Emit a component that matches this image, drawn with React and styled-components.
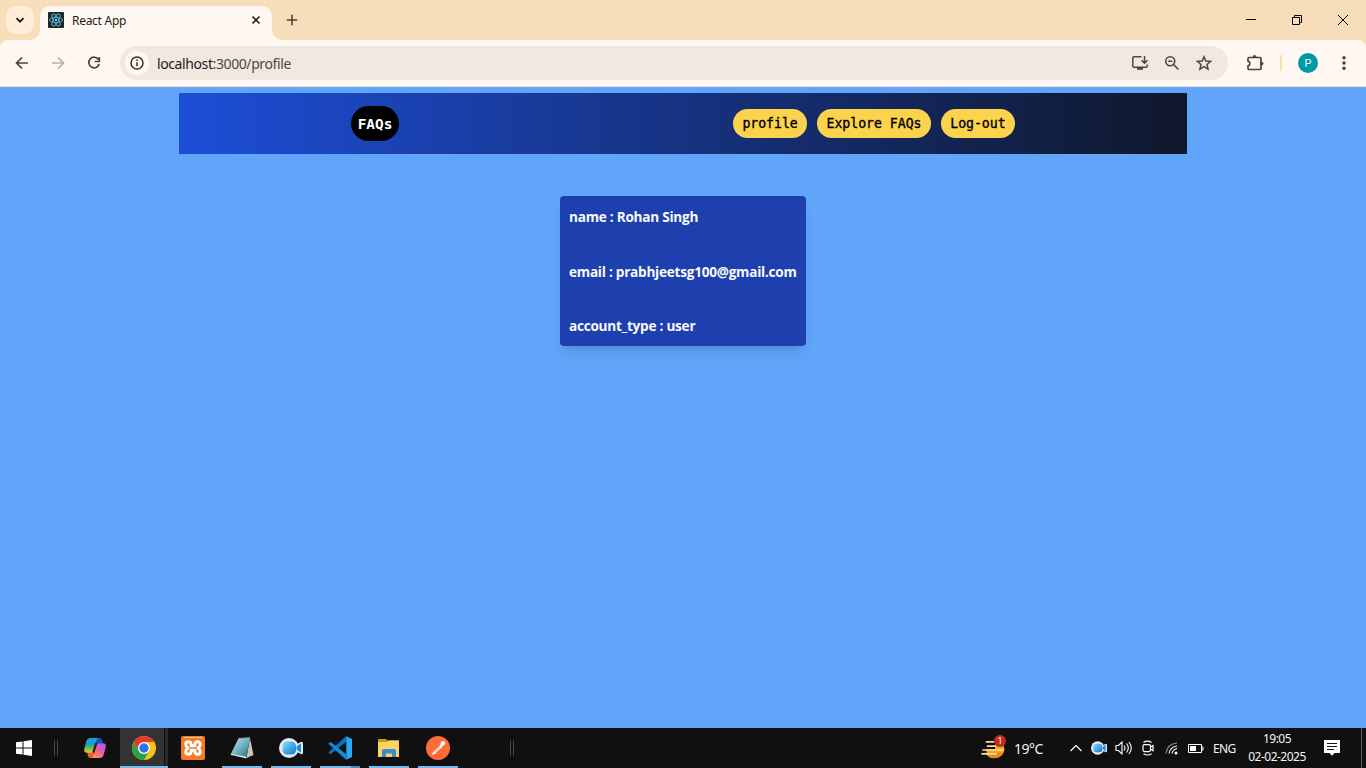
import React from "react";
import styled, { createGlobalStyle } from "styled-components";

const GlobalStyle = createGlobalStyle`
  * { box-sizing: border-box; }
  html, body { margin: 0; height: 100%; overflow: hidden; }
  body { font-family: "Open Sans", "Noto Sans", sans-serif; }
  svg { display: block; flex: none; }
`;

const Screen = styled.div`
  width: 1366px;
  height: 768px;
  display: flex;
  flex-direction: column;
  overflow: hidden;
  background: #60a5fa;
`;

/* ---------- browser frame ---------- */
const TabStrip = styled.header`
  height: 40px;
  flex: none;
  display: flex;
  align-items: flex-start;
  background: #f7deba;
  padding-left: 6px;
`;
const TabSearch = styled.div`
  width: 28px;
  height: 28px;
  margin-top: 6px;
  border-radius: 10px;
  background: #ffedd9;
  display: grid;
  place-items: center;
`;
const Tab = styled.div`
  position: relative;
  width: 232px;
  height: 34px;
  margin: 6px 0 0 6px;
  padding: 0 9px 6px 8px;
  border-radius: 10px 10px 0 0;
  background: #fff8f2;
  display: flex;
  align-items: center;
  &::before,
  &::after {
    content: "";
    position: absolute;
    bottom: 0;
    width: 10px;
    height: 10px;
  }
  &::before {
    left: -10px;
    background: radial-gradient(circle at 0 0, transparent 9.5px, #fff8f2 10px);
  }
  &::after {
    right: -10px;
    background: radial-gradient(circle at 100% 0, transparent 9.5px, #fff8f2 10px);
  }
`;
const TabTitle = styled.span`
  flex: 1;
  margin-left: 8px;
  padding-top: 1px;
  font-family: "Noto Sans", sans-serif;
  font-size: 12px;
  letter-spacing: -0.28px;
  line-height: 16px;
  color: #1f1b16;
`;
const NewTab = styled.div`
  margin: 14px 0 0 14px;
`;
const WindowControls = styled.div`
  margin-left: auto;
  display: flex;
`;
const WindowButton = styled.div`
  width: 46px;
  height: 40px;
  display: grid;
  place-items: center;
`;
const ToolbarShell = styled.div`
  flex: none;
  height: 47px;
  background: #f7deba;
`;
const Toolbar = styled.div`
  height: 47px;
  display: flex;
  align-items: center;
  background: #fff8f2;
  border-radius: 8px 8px 0 0;
  border-bottom: 1px solid #eae0d7;
  padding: 0 14px 0 14px;
`;
const NavIcons = styled.div`
  display: flex;
  gap: 20px;
`;
const AddressBar = styled.div`
  width: 1108px;
  height: 34px;
  flex: none;
  margin-left: 18px;
  border-radius: 17px;
  background: #f1e8e1;
  display: flex;
  align-items: center;
  padding: 0 16px 0 5px;
`;
const SiteInfo = styled.div`
  width: 24px;
  height: 24px;
  border-radius: 50%;
  background: #fff8f2;
  display: grid;
  place-items: center;
`;
const Url = styled.span`
  flex: 1;
  margin-left: 8px;
  padding-top: 1px;
  font-family: "Noto Sans", sans-serif;
  font-size: 14px;
  letter-spacing: -0.4px;
  line-height: 20px;
  color: #51463c;
`;
const Host = styled.span`
  color: #1f1b16;
`;
const AddressIcons = styled.div`
  display: flex;
  gap: 16px;
`;
const ToolbarEnd = styled.div`
  flex: 1;
  display: flex;
  align-items: center;
  padding-left: 18px;
`;
const Separator = styled.i`
  width: 2px;
  height: 16px;
  margin-left: 16px;
  background: #ffdcab;
`;
const Avatar = styled.div`
  width: 20px;
  height: 20px;
  flex: none;
  margin: 0 18px 0 16px;
  border-radius: 50%;
  background: #0097a7;
  color: #e6fcff;
  font: 11px/21px Roboto, sans-serif;
  text-align: center;
`;

/* ---------- web page ---------- */
const Page = styled.main`
  flex: 1;
  display: flex;
  flex-direction: column;
  align-items: center;
  padding-top: 6px;
`;
const Navbar = styled.nav`
  width: 1008px;
  height: 61px;
  padding: 0 172px;
  display: flex;
  align-items: center;
  justify-content: space-between;
  background: linear-gradient(to right, #1d4ed8, #0f172a);
  font-family: "DejaVu Sans Mono", monospace;
  font-weight: 700;
`;
const Brand = styled.div`
  width: 48px;
  height: 35px;
  border-radius: 18px;
  background: #000;
  color: #fff;
  font-size: 14.4px;
  line-height: 36px;
  text-align: center;
`;
const NavLinks = styled.div`
  display: flex;
  gap: 10px;
`;
const NavButton = styled.div`
  height: 29px;
  padding: 0 9.4px;
  border-radius: 15px;
  background: #fcd34d;
  color: #000;
  font-size: 13.2px;
  font-weight: 400;
  -webkit-text-stroke: 0.35px #000;
  letter-spacing: -0.03px;
  line-height: 30px;
  white-space: pre;
`;
const ProfileCard = styled.section`
  width: 246px;
  height: 150px;
  margin-top: 42px;
  padding: 10px 9px 10px;
  display: flex;
  flex-direction: column;
  justify-content: space-between;
  border-radius: 4px;
  background: #1e40af;
  box-shadow: 0 9px 13px -3px rgba(0, 0, 0, 0.1), 0 4px 5px -4px rgba(0, 0, 0, 0.1);
`;
const Field = styled.p`
  margin: 0;
  color: #f8fafc;
  font-family: "Open Sans", sans-serif;
  font-size: 13.6px;
  font-weight: 700;
  line-height: 21px;
  white-space: nowrap;
  letter-spacing: -0.25px;
`;

/* ---------- taskbar ---------- */
const Taskbar = styled.footer`
  height: 40px;
  flex: none;
  display: flex;
  background: #101010;
  color: #fff;
`;
const StartButton = styled.div`
  width: 48px;
  display: grid;
  place-items: center;
`;
const Grip = styled.i`
  width: 4px;
  height: 16px;
  margin: 12px ${(p) => p.$after}px 0 ${(p) => p.$before}px;
  border: solid #454545;
  border-width: 0 1px;
`;
const Apps = styled.div`
  display: flex;
  gap: 1px;
`;
const AppButton = styled.div`
  width: 48px;
  height: 40px;
  display: grid;
  grid-template-rows: 38px 2px;
  justify-items: center;
  align-items: center;
  background: ${(p) => (p.$active ? "linear-gradient(to right, #333 44px, #101010 44px, #101010 45px, #292929 45px)" : "none")};
  &::after {
    content: "";
    width: ${(p) => (p.$active ? 48 : 40)}px;
    height: 2px;
    background: ${(p) => (p.$grouped ? "linear-gradient(to right, #76b9ed 31px, #5486ad 31px)" : p.$open ? "#76b9ed" : "none")};
  }
`;
const AppIcon = styled.div`
  padding-top: 2px;
`;
const Tray = styled.div`
  margin-left: auto;
  display: flex;
  align-items: center;
  font-family: "Noto Sans", sans-serif;
  font-size: 12px;
  color: #f5f5f5;
`;
const Weather = styled.div`
  position: relative;
  width: 26px;
  height: 26px;
`;
const Badge = styled.span`
  position: absolute;
  left: 13px;
  top: 0px;
  width: 12px;
  height: 12px;
  border-radius: 50%;
  background: #c42b1c;
  color: #fff;
  font: 9px/12px "Noto Sans", sans-serif;
  text-align: center;
`;
const Temperature = styled.span`
  width: 62px;
  padding-left: 7px;
  font-size: 14px;
  letter-spacing: -0.5px;
`;
const TrayIcons = styled.div`
  display: flex;
  align-items: center;
  gap: 8px;
`;
const Language = styled.span`
  width: 43px;
  padding-left: 9px;
  font-size: 12px;
  letter-spacing: -0.65px;
`;
const Clock = styled.div`
  width: 60px;
  text-align: center;
  line-height: 18px;
  white-space: nowrap;
  letter-spacing: -0.5px;
`;
const Notices = styled.div`
  width: 55px;
  height: 40px;
  margin-right: 4px;
  padding-right: 4px;
  display: flex;
  align-items: center;
  justify-content: center;
  border-right: 1px solid #5c5c5c;
`;

const Stroke = ({ w = 16, h = w, color = "#51432f", sw = 1.7, children }) => (
  <svg width={w} height={h} viewBox={`0 0 ${w} ${h}`} fill="none" stroke={color} strokeWidth={sw}>
    {children}
  </svg>
);

const ReactLogo = () => (
  <svg width="16" height="16" viewBox="0 0 16 16">
    <rect width="16" height="16" rx="1" fill="#20232a" />
    <g fill="none" stroke="#53b7ce" strokeWidth=".9">
      {[30, 90, 150].map((a) => (
        <ellipse key={a} cx="8" cy="8" rx="6.7" ry="2.6" transform={`rotate(${a - 30} 8 8)`} />
      ))}
    </g>
    <circle cx="8" cy="8" r="1.3" fill="#61dafb" />
  </svg>
);

const CopilotLogo = () => (
  <svg width="24" height="24" viewBox="0 0 24 24">
    <defs>
      <linearGradient id="cpA" x1="0" y1="0" x2="0" y2="1">
        <stop offset="0" stopColor="#1b9df0" />
        <stop offset=".45" stopColor="#18a3b4" />
        <stop offset=".75" stopColor="#8cbf45" />
        <stop offset="1" stopColor="#f5c51d" />
      </linearGradient>
      <linearGradient id="cpB" x1=".8" y1="0" x2=".2" y2="1">
        <stop offset="0" stopColor="#a65af0" />
        <stop offset=".5" stopColor="#ee5f9b" />
        <stop offset="1" stopColor="#ff9a4a" />
      </linearGradient>
    </defs>
    <path d="M12 2h4.500c1.500 0 2.300.9 2.700 2.400l.8 2.900h-3.600c-1.400 0-2.100.8-2.500 2Z" fill="#1751c2" />
    <path d="M12 22H7.500c-1.500 0-2.300-.9-2.700-2.400L4.200 16h3.700c1.300 0 2.100-.8 2.500-2Z" fill="#ef5b34" />
    <path d="M7.500 2H16c-1.500.2-2.200 1.300-2.700 3l-2.900 9.500c-.4 1.600-1.300 2.300-2.700 2.300H4C1.700 16.800.7 15.200 1.300 12.800L3.400 5C4 3 5.400 2 7.500 2Z" fill="url(#cpA)" />
    <path d="M16.500 22H8c1.500-.2 2.200-1.300 2.700-3l2.900-9.500c.4-1.600 1.300-2.300 2.700-2.300H20c2.300 0 3.300 1.600 2.700 4L20.600 19c-.6 2-2 3-4.100 3Z" fill="url(#cpB)" />
    <path d="M12.900 7.300 10.200 16.500" stroke="#30202c" strokeWidth="1.800" />
  </svg>
);

const ChromeLogo = () => (
  <svg width="24" height="24" viewBox="0 0 24 24">
    <circle cx="12" cy="12" r="12" fill="#fbc116" />
    <path d="M12 6h10.390A12 12 0 0 0 1.610 6l5.200 9Z" fill="#e33b2e" />
    <path d="M1.610 6A12 12 0 0 0 12 24l5.200-9L12 17 6.810 15Z" fill="#2aa14b" />
    <circle cx="12" cy="12" r="6" fill="#fff" />
    <circle cx="12" cy="12" r="4.700" fill="#2874eb" />
  </svg>
);

const XamppLogo = () => (
  <svg width="24" height="24" viewBox="0 0 24 24">
    <rect width="24" height="24" rx="2" fill="#f47b23" />
    <path d="M3 1.500h18" stroke="#ffc49a" />
    <path
      d="M10 9.700V8C10 6.300 9 5.800 7.500 5.800S4.700 6.700 4.700 8.300c0 1.700.8 2.600 2.300 3.700-1.500 1.100-2.300 2-2.300 3.700 0 1.600 1.300 2.500 2.800 2.500s2.500-.5 2.500-2.200v-1.700h4v1.700c0 1.700 1 2.200 2.500 2.200s2.800-.9 2.800-2.500c0-1.700-.8-2.600-2.300-3.700 1.500-1.100 2.300-2 2.300-3.700 0-1.600-1.300-2.500-2.800-2.500S14 6.300 14 8v1.700Z"
      fill="none" stroke="#fff" strokeWidth="2.900" strokeLinejoin="round"
    />
  </svg>
);

const NotepadLogo = () => (
  <svg width="24" height="24" viewBox="0 0 24 24">
    <defs>
      <linearGradient id="npA" x1="0" y1="0" x2="1" y2="1">
        <stop offset="0" stopColor="#c5e7ee" />
        <stop offset=".5" stopColor="#72b4c4" />
        <stop offset="1" stopColor="#246a7c" />
      </linearGradient>
    </defs>
    <path d="m20 2 3.500 17-7 3Z" fill="#c9c7ba" />
    <path d="M8.500 2.500 20 1.500 16.500 21 1 17.500Z" fill="url(#npA)" />
    <path d="m1 17.500 15.500 3.300V22.500L.5 18.800Z" fill="#e4eceb" />
    <path d="M8.500 2.500 20 1.500" stroke="#8fa0a2" strokeWidth="1.500" strokeDasharray="1 1" />
  </svg>
);

const CameraLogo = ({ size = 24 }) => (
  <svg width={size} height={size} viewBox="0 0 24 24">
    <defs>
      <linearGradient id="cam" x1="0" y1="0" x2="1" y2="1">
        <stop offset="0" stopColor="#8be0fb" />
        <stop offset="1" stopColor="#0876d2" />
      </linearGradient>
    </defs>
    <path d="M16 9.500 21.500 6q2.500-1 2.500 1.500v9q0 2.500-2.500 1.500L16 14.500Z" fill="#dfe9f3" />
    <circle cx="10" cy="12" r="10" fill="#e6eaf2" />
    <path d="m17.500 10.500 4.500-3.300v9.600l-4.500-3.300Z" fill="#1d91e1" />
    <rect x="3.500" y="5.500" width="13.500" height="13" rx="4.500" fill="url(#cam)" />
  </svg>
);

const CodeLogo = () => (
  <svg width="24" height="24" viewBox="0 0 24 24">
    <path d="m.3 16.200 1.500 1.500q.6.400 1.200 0L18 6V.3L.3 16.200Z" fill="#0873bd" />
    <path d="m.3 7.800 1.500-1.500q.6-.4 1.200 0L18 18v5.700L.3 7.800Z" fill="#108bd8" />
    <path d="m17.500 0 6.500 3v18l-6.500 3q.8-.5.800-1.500v-21q0-1-.8-1.500Z" fill="#29a8f3" />
  </svg>
);

const FolderLogo = () => (
  <svg width="24" height="24" viewBox="0 0 24 24">
    <path d="M1 3h8l1.500 1.500H22V9H1Z" fill="#d99700" />
    <path d="M1 6h9l1.500-1.500H22V21H1Z" fill="#fbd363" />
    <path d="M5 21v-6q0-2 2-2h10q2 0 2 2v6h-4v-3.500H9V21Z" fill="#3a8cd9" />
  </svg>
);

const PostmanLogo = () => (
  <svg width="24" height="24" viewBox="0 0 24 24">
    <circle cx="12" cy="12" r="12" fill="#ff6c37" />
    <path d="m5.500 19 2-3.500 6.500-6 2 1.800-6.600 6.200Z" fill="#fff" />
    <path d="m13.500 9 2-1 1.500 1.500-1.500 2Z" fill="#fff" />
    <circle cx="17" cy="7.200" r="2.200" fill="#fff" />
    <path d="m7 16.500 7-6M9.500 16.500l4.500-4" stroke="#ff6c37" strokeWidth=".6" />
  </svg>
);

const apps = [
  { id: "copilot", Logo: CopilotLogo },
  { id: "chrome", Logo: ChromeLogo, open: true, active: true },
  { id: "xampp", Logo: XamppLogo },
  { id: "notepad", Logo: NotepadLogo, open: true },
  { id: "camera", Logo: CameraLogo, open: true },
  { id: "code", Logo: CodeLogo, open: true, grouped: true },
  { id: "files", Logo: FolderLogo, open: true },
  { id: "postman", Logo: PostmanLogo, open: true },
];

function BrowserFrame() {
  return (
    <>
      <TabStrip>
        <TabSearch>
          <Stroke w={10} color="#1f1b16" sw={1.900}><path d="m1.500 3.200 3.500 3.500 3.500-3.500" /></Stroke>
        </TabSearch>
        <Tab>
          <ReactLogo />
          <TabTitle>React App</TabTitle>
          <Stroke w={14} color="#2b2620" sw={1.700}><path d="m3.500 3.500 7 7m0-7-7 7" /></Stroke>
        </Tab>
        <NewTab>
          <Stroke w={12} color="#51432f" sw={1.600}><path d="M6 .8v10.400M.8 6h10.400" /></Stroke>
        </NewTab>
        <WindowControls>
          <WindowButton><Stroke w={10} color="#000" sw={1}><path d="M0 4.500h10" /></Stroke></WindowButton>
          <WindowButton><Stroke w={10} color="#000" sw={1}><path d="M.5 2.500h7v7h-7zM2.500 2.500v-2h7v7h-2" /></Stroke></WindowButton>
          <WindowButton><Stroke w={10} color="#000" sw={1}><path d="m0 0 10 10M10 0 0 10" /></Stroke></WindowButton>
        </WindowControls>
      </TabStrip>
      <ToolbarShell>
        <Toolbar>
          <NavIcons>
            <Stroke><path d="M14 8H3M8 2.500 2.500 8 8 13.500" /></Stroke>
            <Stroke color="#b5ada5"><path d="M2 8h11M8 2.500 13.500 8 8 13.500" /></Stroke>
            <Stroke sw={1.700}><path d="M12.600 4.700A5.300 5.300 0 1 0 13.200 9M13.300 2v4.500H8.700" /></Stroke>
          </NavIcons>
          <AddressBar>
            <SiteInfo>
              <Stroke w={14} color="#393027" sw={1.500}><circle cx="7" cy="7" r="6" /><path d="M7 6.200v4M7 3.500v1.400" /></Stroke>
            </SiteInfo>
            <Url><Host>localhost</Host>:3000/profile</Url>
            <AddressIcons>
              <Stroke color="#51463c" sw={1.500}>
                <path d="M9.500 1.800H2q-1.200 0-1.200 1v8.500q0 1 1.200 1h12q1.200 0 1.200-1V9.500M12.500 1v7M9.500 5.300l3 3 3-3" />
                <path d="M5 13.800h6" strokeWidth="2" />
              </Stroke>
              <Stroke color="#51463c" sw={1.600}><circle cx="6.200" cy="6.200" r="4.500" /><path d="m9.500 9.500 5 5M4.200 6.200h4" /></Stroke>
              <Stroke color="#51463c" sw={1.500}><path d="m8 1.800 1.800 4.300 4.700.4-3.500 3 1.100 4.600L8 11.700l-4.100 2.400L5 9.500l-3.500-3 4.700-.4Z" /></Stroke>
            </AddressIcons>
          </AddressBar>
          <ToolbarEnd>
            <Stroke w={18} sw={1.700}>
              <path d="M3 3.500h11q1 0 1 1v10q0 1-1 1H3q-1 0-1-1v-2.600q1.900-.4 1.900-2.400T2 7.100V4.500q0-1 1-1Z" />
              <path d="M7 2.800a1.500 1.500 0 0 1 3 0v.7H7ZM15 8h.7a1.500 1.500 0 0 1 0 3H15Z" fill="#51432f" strokeWidth=".6" />
            </Stroke>
            <Separator />
            <Avatar>P</Avatar>
            <svg width="16" height="16" viewBox="0 0 16 16" fill="#51432f">
              <circle cx="8" cy="2.800" r="1.700" /><circle cx="8" cy="8" r="1.700" /><circle cx="8" cy="13.200" r="1.700" />
            </svg>
          </ToolbarEnd>
        </Toolbar>
      </ToolbarShell>
    </>
  );
}

function SystemTray() {
  return (
    <Tray>
      <Weather>
        <svg width="26" height="26" viewBox="0 0 26 26">
          <path d="M14 4.500A10.200 10.200 0 0 1 23.500 14 10.200 10.200 0 0 1 4.500 18l1-4H14Z" fill="#f9a51d" />
          <path d="M4.500 17.500a10.200 10.200 0 0 0 18.600-1L14 18Z" fill="#ee8a1a" />
          <path d="M5.500 6.800h7M6.500 11.200h8M2 15h20M1 18.800h14" stroke="#fae09a" strokeWidth="1.700" strokeLinecap="round" />
          <path d="M3 17h3" stroke="#2a1c0b" strokeWidth="1.200" />
        </svg>
        <Badge>1</Badge>
      </Weather>
      <Temperature>19°C</Temperature>
      <TrayIcons>
        <Stroke w={14} color="#fff" sw={1.200}><path d="m1.500 10 5.500-5.500 5.500 5.500" /></Stroke>
        <CameraLogo size={16} />
        <Stroke w={17} h={16} color="#fff" sw={1.100}>
          <path d="M1 5.500h2.500L7 2v12l-3.500-3.500H1ZM9 5.500q2 2.500 0 5M11.500 3.500q3.600 4.500 0 9M13.800 2q5 6 0 12" />
        </Stroke>
        <Stroke w={16} color="#fff" sw={1.200}>
          <rect x="3" y="4.600" width="7.500" height="7" rx="1.500" /><path d="m10.500 7 2.500-1.500v5.200l-2.500-1.500M3.500 2.500q4-2.600 8 0M3.500 13.700q4 2.600 8 0" />
        </Stroke>
        <Stroke w={16} color="#8b8b8b" sw={1.100}>
          <path d="M2 13.500Q3 4 13 3" /><path d="M5 13.500Q6 7 13 6M8 13.500q.7-4 5-5" stroke="#fff" /><circle cx="12" cy="13" r="1.500" fill="#fff" stroke="none" />
        </Stroke>
        <Stroke w={16} color="#fff" sw={1}>
          <path d="M.5 4.500h13v8H.5zM13.500 7h1.500v3h-1.500" /><path d="M2 6h6v5H2z" fill="#fff" stroke="none" />
        </Stroke>
      </TrayIcons>
      <Language>ENG</Language>
      <Clock>
        <div>19:05</div>
        <div>02-02-2025</div>
      </Clock>
      <Notices>
        <svg width="16" height="16" viewBox="0 0 16 16">
          <path d="M0 0h16v13h-5.500L8 15.700 5.500 13H0Z" fill="#fff" />
          <path d="M3 3.500h10M3 6.500h10M3 9.500h7" stroke="#101010" />
        </svg>
      </Notices>
    </Tray>
  );
}

export default function App() {
  return (
    <Screen>
      <GlobalStyle />
      <BrowserFrame />
      <Page>
        <Navbar>
          <Brand>FAQs</Brand>
          <NavLinks>
            <NavButton>profile</NavButton>
            <NavButton>Explore FAQs</NavButton>
            <NavButton>Log-out</NavButton>
          </NavLinks>
        </Navbar>
        <ProfileCard>
          <Field>name : Rohan Singh</Field>
          <Field>email : prabhjeetsg100@gmail.com</Field>
          <Field>account_type : user</Field>
        </ProfileCard>
      </Page>
      <Taskbar>
        <StartButton>
          <svg width="16" height="16" viewBox="0 0 16 16" fill="#fff">
            <path d="M0 2.300 6.500 1.400V7.500H0ZM7.500 1.200 16 0v7.500H7.500ZM0 8.500h6.500v6.100L0 13.700ZM7.500 8.500H16V16l-8.500-1.200Z" />
          </svg>
        </StartButton>
        <Grip $before={6} $after={13} />
        <Apps>
          {apps.map(({ id, Logo, open, active, grouped }) => (
            <AppButton key={id} $open={open} $active={active} $grouped={grouped}>
              <AppIcon><Logo /></AppIcon>
            </AppButton>
          ))}
        </Apps>
        <Grip $before={48} $after={0} />
        <SystemTray />
      </Taskbar>
    </Screen>
  );
}
